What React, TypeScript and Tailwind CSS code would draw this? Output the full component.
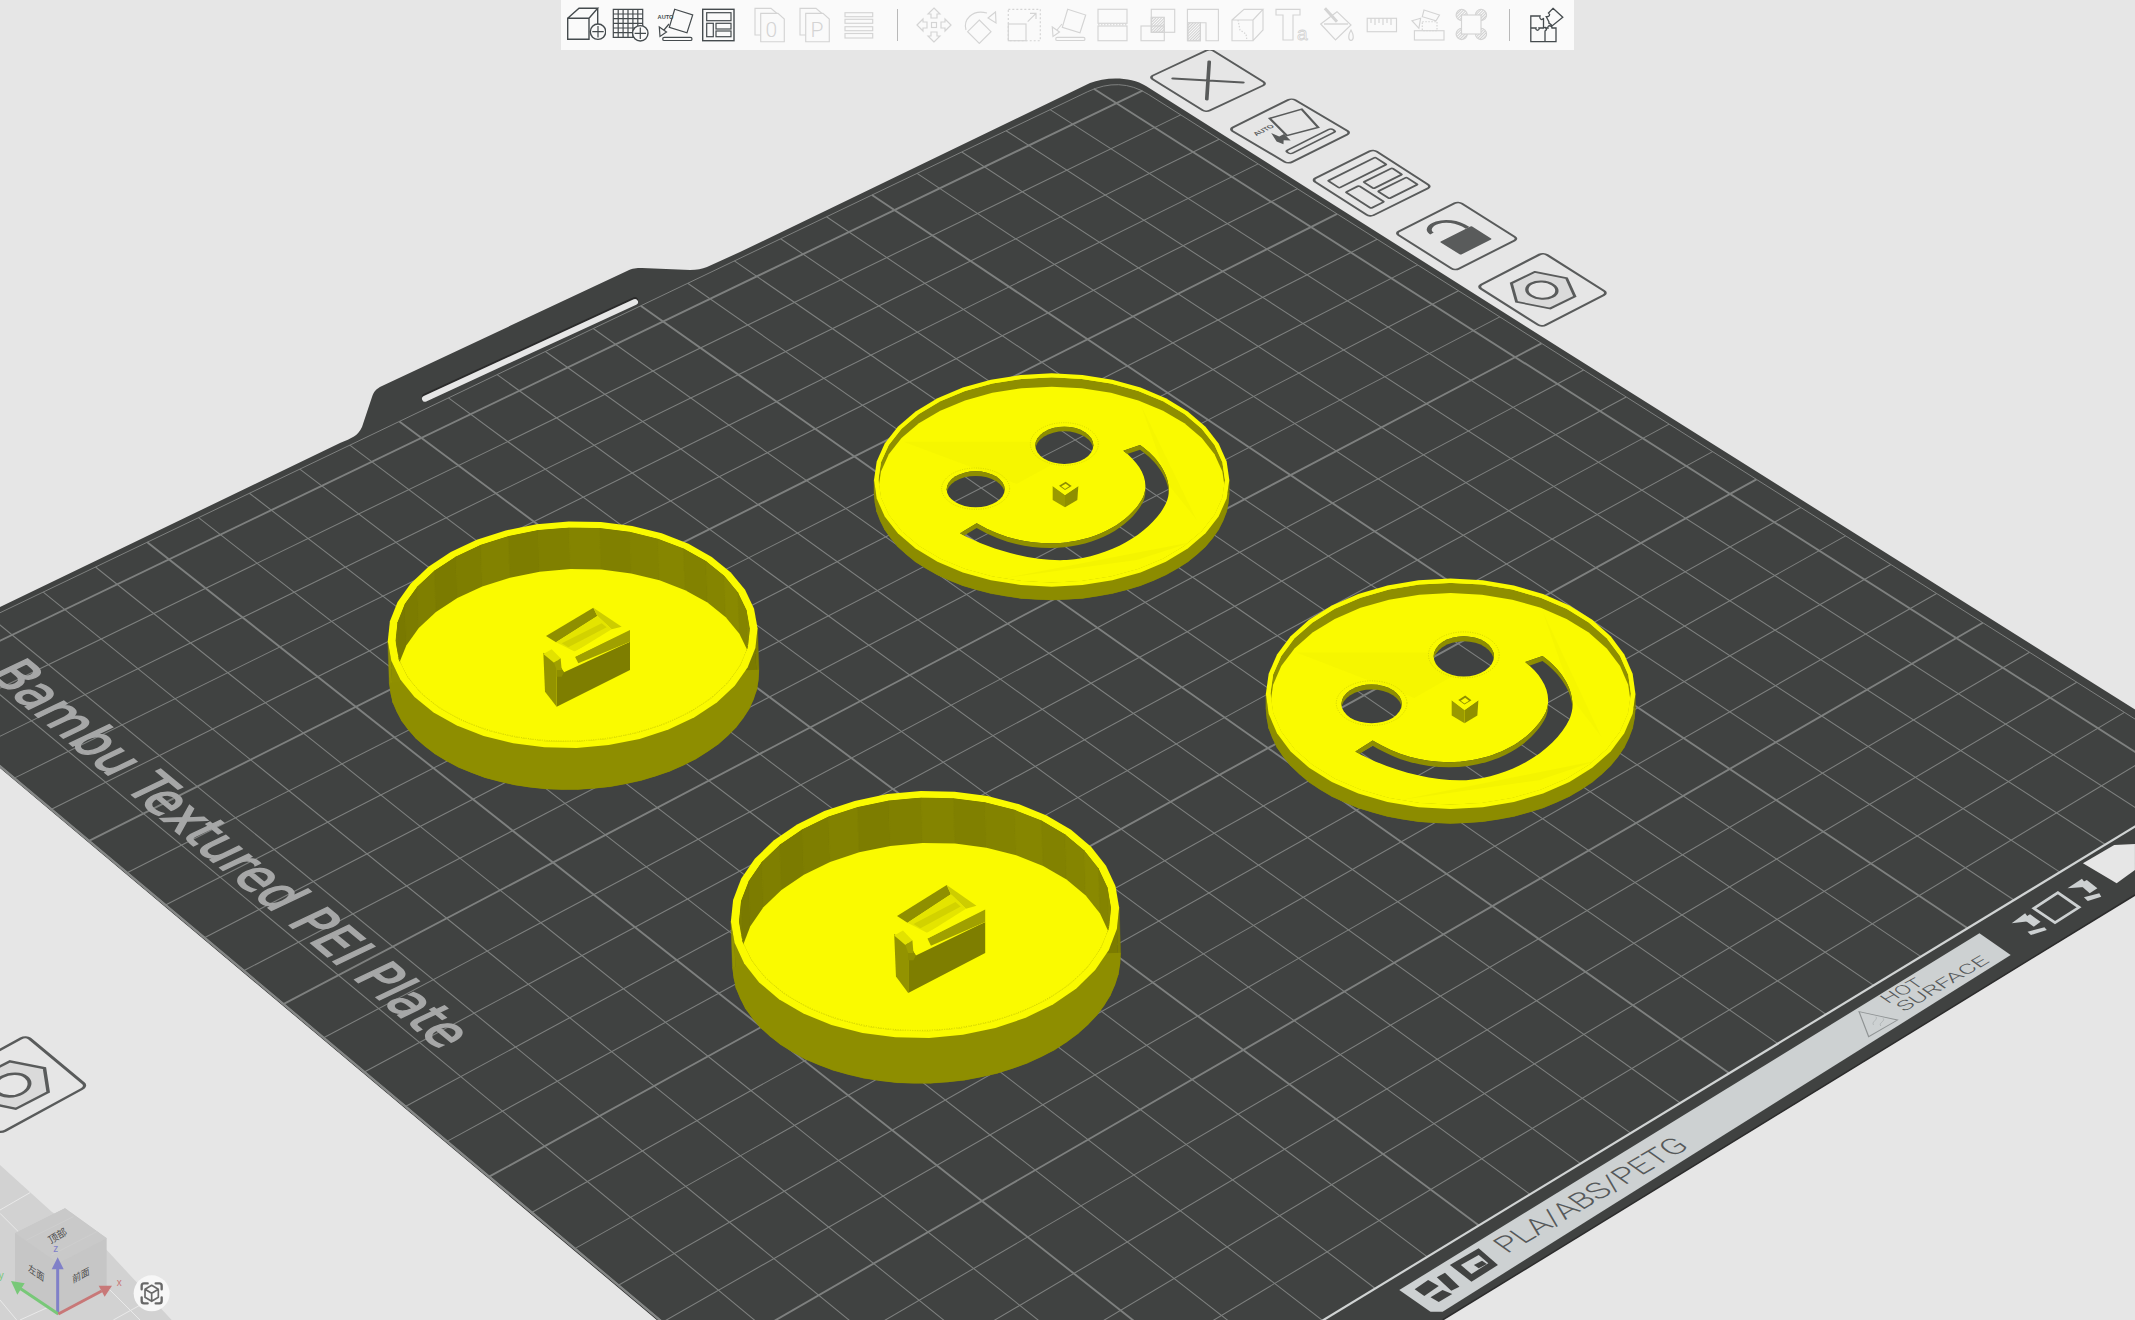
import type { ReactNode } from 'react'

type P = [number, number]

// grid anchors read off the reference: [u, v, x, y], one unit = 5 cells
const ANCHORS: number[][] = [
  [-2, 0, 421.7, 437.7], [-1, 0, 663.3, 321], [0, 0, 894.6, 210], [1, 0, 1116, 103.3],
  [0, 1, 1087.5, 340], [1, 1, 1310.7, 226.7], [1, 3, 1730.5, 494.4], [1, 4, 1956, 638.7],
  [0, 4, 1730.5, 768.8], [-1, 4, 1493, 906.7], [0, 5, 1967.4, 926.7], [-1, 5, 1729, 1073],
  [-3, 3, 759, 1026.7], [-3, 4, 981.8, 1201.7], [-4, 3, 490.5, 1176.7],
]

function fitHomography(pts: number[][]) {
  const A: number[][] = Array.from({ length: 8 }, () => new Array(9).fill(0))
  const add = (r: number[], t: number) => {
    for (let i = 0; i < 8; i++) {
      for (let j = 0; j < 8; j++) A[i][j] += r[i] * r[j]
      A[i][8] += r[i] * t
    }
  }
  for (const [u, v, x, y] of pts) {
    add([u, v, 1, 0, 0, 0, -u * x, -v * x], x)
    add([0, 0, 0, u, v, 1, -u * y, -v * y], y)
  }
  for (let i = 0; i < 8; i++) {
    let m = i
    for (let k = i + 1; k < 8; k++) if (Math.abs(A[k][i]) > Math.abs(A[m][i])) m = k
    ;[A[i], A[m]] = [A[m], A[i]]
    for (let k = 0; k < 8; k++) {
      if (k === i) continue
      const f = A[k][i] / A[i][i]
      for (let j = i; j < 9; j++) A[k][j] -= f * A[i][j]
    }
  }
  return A.map((r, i) => r[8] / r[i])
}

const H = fitHomography(ANCHORS)
const proj = (u: number, v: number): P => {
  const w = H[6] * u + H[7] * v + 1
  return [(H[0] * u + H[1] * v + H[2]) / w, (H[3] * u + H[4] * v + H[5]) / w]
}

const U_MIN = -4
const U_MAX = 1.12
const V_MIN = -0.12
const V_MAX = 5

function Grid() {
  const lines: ReactNode[] = []
  for (let i = 0; i <= 25; i++) {
    const u = U_MIN + i * 0.2
    const [a, b] = [proj(u, V_MIN), proj(u, V_MAX)]
    lines.push(<line key={'u' + i} x1={a[0]} y1={a[1]} x2={b[0]} y2={b[1]} strokeWidth={i % 5 === 0 ? 1.9 : 1.05} />)
  }
  for (let i = 0; i < 25; i++) {
    const v = i * 0.2
    const [a, b] = [proj(U_MIN, v), proj(U_MAX, v)]
    lines.push(<line key={'v' + i} x1={a[0]} y1={a[1]} x2={b[0]} y2={b[1]} strokeWidth={i % 5 === 0 ? 1.9 : 1.05} />)
  }
  const c0 = proj(0.97, V_MIN)
  const cq = proj(U_MAX, V_MIN)
  const c1 = proj(U_MAX, 0.03)
  const lt = proj(U_MIN, V_MIN)
  const rb = proj(U_MAX, V_MAX)
  const lb = proj(U_MIN, V_MAX)
  return (
    <g stroke="#7e807f">
      {lines}
      <path
        d={`M${lt[0]} ${lt[1]} L${c0[0]} ${c0[1]} Q${cq[0]} ${cq[1]} ${c1[0]} ${c1[1]} L${rb[0]} ${rb[1]}`}
        fill="none"
        strokeWidth={1}
      />
      <line x1={lt[0]} y1={lt[1]} x2={lb[0]} y2={lb[1]} strokeWidth={2.2} stroke="#858786" />
      <line x1={lb[0]} y1={lb[1]} x2={rb[0]} y2={rb[1]} strokeWidth={2.2} stroke="#d0d3d3" />
    </g>
  )
}

const PLATE =
  'M0 607 L340 443 C352 438 358 436 362 427 L372 397 C374 391 376 389 382 386 L627 271 C633 268 636 268 642 268 L690 270 C697 270 702 269 707 267 L740 252 L1090 83 C1105 77 1130 76 1146 86 L1560 348 L2135 709.5 L2200 750 L2135 895 L1442.6 1320 L658 1320 L0 767 Z'

function Tile({ l, t, b, children }: { l: P; t: P; b: P; children: ReactNode }) {
  const m = [(t[0] - l[0]) / 100, (t[1] - l[1]) / 100, (b[0] - l[0]) / 100, (b[1] - l[1]) / 100, l[0], l[1]].join(' ')
  return (
    <g transform={`matrix(${m})`} stroke="#595b5b" fill="none" strokeWidth={3.4}>
      <rect x={-2} y={-2} width={104} height={104} rx={6} />
      {children}
    </g>
  )
}

function HexNut() {
  return (
    <>
      <polygon points="68,19 87,51 69,83 31,82 11,48 32,18" fill="#dadada" />
      <circle cx={49} cy={50} r={17} fill="#e6e6e6" strokeWidth={3.8} />
    </>
  )
}

function PlateTiles() {
  return (
    <g>
      <Tile l={[1151.7, 77.3]} t={[1210, 50]} b={[1206, 111]}>
        <path d="M19 19 L81 81 M81 19 L19 81" strokeWidth={4.6} strokeLinecap="round" />
      </Tile>
      <Tile l={[1231.7, 129.3]} t={[1291.7, 99.3]} b={[1288.3, 162.7]}>
        <polygon points="51,13 94,24 81,67 40,55" strokeWidth={3.2} />
        <rect x={15} y={79} width={76} height={9} rx={4} strokeWidth={2.8} />
        <text x={12} y={31} fontSize={11} fontWeight={700} stroke="none" fill="#595b5b" className="font-['Liberation_Sans']">AUTO</text>
        <polygon points="22,56 30,38 32,50 40,50 36,66 30,60 24,66" fill="#595b5b" stroke="none" />
      </Tile>
      <Tile l={[1314.3, 180]} t={[1373.3, 150.7]} b={[1370, 215.7]}>
        <rect x={12} y={12} width={80} height={20} rx={1.5} strokeWidth={3.2} />
        <rect x={12} y={44} width={22} height={45} rx={1.5} strokeWidth={3.2} />
        <rect x={44} y={42} width={48} height={18} rx={1.5} strokeWidth={3.2} />
        <rect x={44} y={68} width={48} height={20} rx={1.5} strokeWidth={3.2} />
      </Tile>
      <Tile l={[1397.7, 233.3]} t={[1458.3, 202.7]} b={[1455, 269.3]}>
        <path d="M31 27 C31 8 72 6 72 46" strokeWidth={6} />
        <rect x={26} y={46} width={52} height={36} rx={1.5} fill="#595b5b" stroke="none" />
      </Tile>
      <Tile l={[1480, 286.7]} t={[1543.3, 254]} b={[1541.7, 325.7]}>
        <HexNut />
      </Tile>
      <Tile l={[-58, 1083]} t={[25.5, 1037.5]} b={[0.5, 1131.7]}>
        <HexNut />
      </Tile>
    </g>
  )
}

function PlateLabels() {
  return (
    <g>
      {/* name printed along the left edge */}
      <text
        transform="matrix(0.762 0.631 -1.3 0.62 -14 674)"
        x={0}
        y={0}
        fontSize={40}
        fill="#a6a7a7"
        stroke="#a6a7a7"
        strokeWidth={1.3}
        textLength={596}
        lengthAdjust="spacingAndGlyphs"
        className="font-['DejaVu_Sans']"
      >
        Bambu Textured PEI Plate
      </text>
      {/* bottom strip, coordinates are stretched to the crop I measured from */}
      <g transform={`matrix(${1 / 2.077} 0 0 ${1 / 3} 1380 820)`}>
        <polygon points="40,1410 1245,340 1310,405 130,1475 105,1475" fill="#cdd1d2" />
        <polygon points="72,1408 100,1380 122,1398 92,1428" fill="#404241" />
        <polygon points="105,1432 130,1410 150,1422 122,1446" fill="#404241" />
        <polygon points="118,1372 135,1358 165,1400 148,1412" fill="#404241" />
        <polygon points="145,1335 205,1285 245,1335 190,1385" fill="#404241" />
        <polygon points="168,1335 205,1305 225,1330 190,1362" fill="#cdd1d2" />
        <polygon points="195,1335 212,1322 222,1332 205,1345" fill="#404241" />
        <polygon points="995,575 1075,600 1015,650" fill="none" stroke="#8f9394" strokeWidth={2.5} />
        <path d="M1025 615 C1020 605 1035 600 1030 590 M1040 618 C1035 608 1050 604 1045 595" fill="none" stroke="#a2a6a7" strokeWidth={1.5} />
        {/* up arrows and the little plate between them */}
        <polygon points="1312,310 1340,280 1352,303" fill="#cdd1d2" />
        <polygon points="1335,296 1350,283 1372,305 1358,320" fill="#cdd1d2" />
        <polygon points="1345,335 1380,322 1385,330 1352,345" fill="#cdd1d2" />
        <polygon points="1358,265 1408,218 1452,262 1402,308" fill="none" stroke="#cdd1d2" strokeWidth={7} />
        <polygon points="1428,205 1458,176 1470,200" fill="#cdd1d2" />
        <polygon points="1452,192 1468,180 1490,205 1474,220" fill="#cdd1d2" />
        <polygon points="1462,232 1494,220 1498,230 1470,243" fill="#cdd1d2" />
        <polygon points="1460,130 1525,75 1568,72 1568,150 1530,190" fill="#e6e6e6" />
      </g>
      <text
        transform="matrix(0.864 -0.504 1.06 0.75 1507 1254)"
        fontSize={22}
        fontWeight={300}
        fill="#56595a"
        textLength={212}
        lengthAdjust="spacingAndGlyphs"
        className="font-['Roboto']"
      >
        PLA/ABS/PETG
      </text>
      <text
        transform="matrix(0.88 -0.475 1.06 0.75 1888 1004)"
        fontSize={13}
        fontWeight={300}
        fill="#56595a"
        textLength={42}
        lengthAdjust="spacingAndGlyphs"
        className="font-['Roboto']"
      >
        HOT
      </text>
      <text
        transform="matrix(0.864 -0.504 1.06 0.75 1904 1012)"
        fontSize={13}
        fontWeight={300}
        fill="#56595a"
        textLength={100}
        lengthAdjust="spacingAndGlyphs"
        className="font-['Roboto']"
      >
        SURFACE
      </text>
    </g>
  )
}

const ring = (cx: number, cy: number, rx: number, ry: number, a0 = 0, a1 = Math.PI * 2, n = 36): P[] => {
  const out: P[] = []
  for (let i = 0; i <= n; i++) {
    const t = a0 + ((a1 - a0) * i) / n
    out.push([cx + rx * Math.cos(t), cy + ry * Math.sin(t)])
  }
  return out
}
const pts = (p: P[]) => p.map((q) => q.join(',')).join(' ')

// one band per facet, shade runs from the value at a0 to the value at a1
function Facets({ cx, cy, rx, ry, h, a0, a1, from, to, n = 18 }: {
  cx: number; cy: number; rx: number; ry: number; h: number; a0: number; a1: number; from: number; to: number; n?: number
}) {
  const top = ring(cx, cy, rx, ry, a0, a1, n)
  const bands = []
  for (let i = 0; i < n; i++) {
    const g = Math.round(from + ((to - from) * i) / n + (i % 3 === 0 ? 3 : i % 3 === 1 ? -2 : 0))
    const c = `rgb(${g},${g},0)`
    bands.push(
      <polygon
        key={i}
        points={pts([top[i], top[i + 1], [top[i + 1][0], top[i + 1][1] + h], [top[i][0], top[i][1] + h]])}
        fill={c}
        stroke={c}
        strokeWidth={1}
      />,
    )
  }
  return <>{bands}</>
}

const YELLOW = '#fafa00'

function BatteryBox() {
  return (
    <g>
      <polygon points="530,590 750,480 750,395 552,487 530,455" fill="#7e7e00" />
      <polygon points="490,428 495,545 530,590 530,452" fill="#939300" />
      <polygon points="530,452 552,487 545,500 530,500" fill="#8e8e00" />
      <polygon points="485,358 648,282 750,348 750,395 590,460 480,388" fill={YELLOW} />
      <polygon points="498,378 640,293 652,318 528,397" fill="#8f8f00" />
      <polygon points="640,293 725,350 695,358 652,318" fill="#cdcd00" />
      <polygon points="528,397 652,318 695,358 585,425" fill="#e4e400" />
      <polygon points="545,400 665,340 680,352 565,412" fill="#d2d200" />
      <polygon points="585,440 750,360 750,395 595,460" fill="#a0a000" />
      <polygon points="582,425 745,345 750,358 585,440" fill={YELLOW} />
      <polygon points="480,385 495,383 585,450 575,460" fill={YELLOW} />
      <polygon points="490,432 515,418 542,445 522,458" fill="#e2e200" />
      <polygon points="522,458 542,445 545,480 530,480" fill="#a0a000" />
    </g>
  )
}

function Cup({ id, m }: { id: string; m: string }) {
  const cx = 578
  const cy = 374
  const h = 125
  const inner = ring(cx, cy, 532, 322)
  return (
    <g transform={`matrix(${m})`}>
      <g transform={`rotate(-2 ${cx} ${cy})`}>
        <clipPath id={id}>
          <polygon points={pts(inner)} />
        </clipPath>
        <Facets cx={cx} cy={cy} rx={555} ry={340} h={h} a0={0} a1={Math.PI} from={124} to={148} />
        <polygon points={pts(ring(cx, cy + h, 555, 340, 0, Math.PI))} fill="#8e8e00" />
        <polygon points={pts(ring(cx, cy, 555, 340))} fill={YELLOW} />
        <g clipPath={`url(#${id})`}>
          <polygon points={pts(inner)} fill="#8a8a00" />
          <Facets cx={cx} cy={cy} rx={532} ry={322} h={h + 6} a0={Math.PI} a1={Math.PI * 2} from={122} to={136} />
          <polygon points={pts(ring(cx, cy + h, 532, 322))} fill={YELLOW} />
          <polyline points={pts(ring(cx, cy - 3, 532, 322, 0.1, Math.PI - 0.1))} fill="none" stroke="#c4c400" strokeWidth={2} strokeDasharray="3 4" />
        </g>
      </g>
      <BatteryBox />
    </g>
  )
}

const SMILE =
  'M840 255 C905 300 945 370 918 430 C880 510 760 590 620 600 C520 605 390 570 300 520 L350 490 C420 530 490 550 570 550 C700 550 810 490 850 410 C870 360 840 310 790 272 Z'

function Holes({ fill, dy = 0 }: { fill: string; dy?: number }) {
  return (
    <g fill={fill} transform={`translate(0 ${dy})`}>
      <ellipse cx={613} cy={256} rx={87} ry={56} />
      <ellipse cx={347} cy={388} rx={87} ry={54} />
      <path d={SMILE} />
    </g>
  )
}

function Smiley({ id, m }: { id: string; m: string }) {
  const cx = 575
  const cy = 360
  const inner = ring(cx, cy, 520, 308)
  const box = { x: 0, y: 0, width: 1200, height: 800 }
  return (
    <g transform={`matrix(${m})`}>
      <mask id={id + 'a'} maskUnits="userSpaceOnUse" {...box}>
        <rect {...box} fill="#fff" />
        <Holes fill="#000" />
      </mask>
      <mask id={id + 'b'} maskUnits="userSpaceOnUse" {...box}>
        <rect {...box} fill="#fff" />
        <Holes fill="#000" dy={14} />
      </mask>
      <clipPath id={id + 'c'}>
        <polygon points={pts(inner)} />
      </clipPath>
      <g mask={`url(#${id}a)`}>
        <Facets cx={cx} cy={cy} rx={533} ry={320} h={40} a0={0} a1={Math.PI} from={124} to={146} />
        <polygon points={pts(ring(cx, cy + 40, 533, 320, 0, Math.PI))} fill="#8c8c00" />
        <polygon points={pts(ring(cx, cy, 533, 320))} fill={YELLOW} />
        <g clipPath={`url(#${id}c)`}>
          <polygon points={pts(inner)} fill="#8e8e00" />
          <polygon points={pts(ring(cx, cy + 28, 520, 308))} fill={YELLOW} />
          {/* faint mesh triangles on the flat face */}
          <polygon points="130,245 700,245 470,372" fill="#f6f600" />
          <polygon points="430,655 1000,545 830,600" fill="#f4f400" />
          <polygon points="840,130 1010,480 930,380" fill="#f6f600" />
        </g>
      </g>
      <g mask={`url(#${id}b)`}>
        <Holes fill="#8e8e00" />
      </g>
      <g fill="none" stroke="#c8c800" strokeWidth={2} strokeDasharray="3 4">
        <ellipse cx={613} cy={252} rx={102} ry={64} />
        <ellipse cx={347} cy={386} rx={102} ry={62} />
      </g>
      <polygon points="615,405 655,378 652,420 615,442" fill="#8f8f00" />
      <polygon points="578,378 615,405 615,442 578,420" fill="#9a9a00" />
      <polygon points="578,378 618,352 655,378 615,405" fill={YELLOW} />
      <polygon points="597,377 617,365 635,378 615,390" fill="#8e8e00" />
      <polygon points="604,379 617,371 628,379 615,387" fill={YELLOW} />
    </g>
  )
}

function Gizmo() {
  return (
    <g transform={`matrix(${1 / 3} 0 0 ${1 / 3} 0 1020)`}>
      <polygon points="0,435 155,575 320,690 515,900 0,900" fill="#d2d2d2" />
      <g stroke="#e9e9e9" strokeWidth={3}>
        <line x1={0} y1={570} x2={90} y2={518} />
        <line x1={0} y1={580} x2={60} y2={640} />
        <line x1={0} y1={840} x2={50} y2={900} />
        <line x1={320} y1={800} x2={420} y2={900} />
        <line x1={340} y1={900} x2={430} y2={850} />
        <line x1={60} y1={900} x2={170} y2={850} />
      </g>
      <polygon points="45,640 195,565 320,655 320,800 175,885 45,790" fill="#c6c6c6" />
      <polygon points="45,640 195,565 320,655 175,730" fill="#c9c9c9" />
      <g stroke="#d0d0d0" strokeWidth={2}>
        <line x1={80} y1={660} x2={220} y2={590} />
        <line x1={155} y1={705} x2={290} y2={635} />
      </g>
      <text transform="matrix(0.87 -0.5 0.5 0.87 152 672)" fontSize={30} fill="#4f4f4f" className="font-['Noto_Sans_CJK_SC']">顶部</text>
      <text transform="matrix(0.82 0.57 -0.1 1 84 752)" fontSize={29} fill="#4f4f4f" className="font-['Noto_Sans_CJK_SC']">左面</text>
      <text transform="matrix(0.88 -0.47 0.1 1 218 790)" fontSize={29} fill="#4f4f4f" className="font-['Noto_Sans_CJK_SC']">前面</text>
      <line x1={173} y1={882} x2={173} y2={745} stroke="#8080c8" strokeWidth={9} />
      <polygon points="173,712 155,748 191,748" fill="#8080c8" />
      <line x1={175} y1={882} x2={62} y2={806} stroke="#78c878" strokeWidth={9} />
      <polygon points="33,783 74,790 52,824" fill="#78c878" />
      <line x1={175} y1={882} x2={305} y2={813} stroke="#c87878" strokeWidth={9} />
      <polygon points="336,797 296,797 314,830" fill="#c87878" />
      <text x={160} y={697} fontSize={30} fill="#8080c8" className="font-['Liberation_Sans']">z</text>
      <text x={350} y={797} fontSize={30} fill="#c87878" className="font-['Liberation_Sans']">x</text>
      <text x={-4} y={778} fontSize={30} fill="#78c878" className="font-['Liberation_Sans']">y</text>
      <circle cx={455} cy={820} r={54} fill="#f7f7f7" />
      <g fill="none" stroke="#686868" strokeWidth={7} strokeLinecap="round" strokeLinejoin="round">
        <path d="M425 808 V797 Q425 790 432 790 H443 M467 790 H478 Q485 790 485 797 V808 M485 832 V843 Q485 850 478 850 H467 M443 850 H432 Q425 850 425 843 V832" />
        <path d="M455 796 L475 808 V832 L455 844 L435 832 V808 Z M435 808 L455 820 L475 808 M455 820 V844" strokeWidth={5} />
      </g>
    </g>
  )
}

function Scene() {
  return (
    <svg viewBox="0 0 2135 1320" className="block h-full w-full">
      <path d={PLATE} fill="#404241" />
      <path d="M658 1320 L0 767" stroke="#2c2c2c" strokeWidth={1.5} fill="none" />
      <path d="M1442.6 1320 L2135 895" stroke="#2c2c2c" strokeWidth={1.5} fill="none" />
      <line x1={425} y1={396.7} x2={635} y2={300} stroke="#2a2a2a" strokeWidth={6} strokeLinecap="round" />
      <line x1={425} y1={398.7} x2={635} y2={302} stroke="#e6e6e6" strokeWidth={6} strokeLinecap="round" />
      <Grid />
      <PlateLabels />
      <PlateTiles />
      <Cup id="cup1" m={`${1 / 3} 0 0 ${1 / 3} 380 510`} />
      <Cup id="cup2" m="0.35 0 0 0.3633 722.7 778.6" />
      <Smiley id="smile1" m={`${1 / 3} 0 0 ${1 / 3} 860 360`} />
      <Smiley id="smile2" m="0.3467 0 0 0.36 1251.3 564.2" />
      <Gizmo />
    </svg>
  )
}

function Ico({ on, children }: { on?: boolean; children: ReactNode }) {
  return (
    <svg
      viewBox="0 0 40 40"
      fill="none"
      stroke="currentColor"
      strokeWidth={on ? 1.2 : 1.15}
      className={on ? 'h-10 w-10 shrink-0 text-[#454b4e]' : 'h-10 w-10 shrink-0 text-[#d4d4d4]'}
    >
      {children}
    </svg>
  )
}

const Tilted = ({ auto }: { auto?: boolean }) => (
  <>
    <polygon points="19.7,5.3 37.7,11 32,28.7 14.3,23.3" />
    <rect x={7.7} y={33.3} width={29.3} height={3.2} rx={1.6} />
    <path d="M14 20 L9 26 M4.3 23 L5 32.5 L11.5 28 Z" />
    {auto && (
      <text x={2.6} y={14.5} fontSize={5.6} fontWeight={700} fill="currentColor" stroke="none" className="font-['Liberation_Sans']">
        AUTO
      </text>
    )}
  </>
)

const Pages = ({ label }: { label: string }) => (
  <>
    <path d="M10.7 31 H5 V4.3 H21 L26.7 9.3" />
    <path d="M10.7 9.3 H28 L34.3 15 V37.7 H10.7 Z" />
    <text x={15.5} y={32.5} fontSize={21} fontWeight={300} stroke="none" fill="currentColor" className="font-['Roboto']">
      {label}
    </text>
  </>
)

function Toolbar() {
  return (
    <div className="absolute inset-x-0 top-0 flex justify-center">
      <div className="flex h-[50px] w-[1013px] items-start bg-[#fafafa] pl-[5px] pt-1">
        <div className="flex gap-[4.4px]">
          <Ico on>
            <path d="M1.7 14.3 H23 V35.3 H1.7 Z M1.7 14.3 L13 4.3 H31.7 L23 14.3 M31.7 4.3 V20" strokeWidth={1.4} />
            <circle cx={32} cy={27.7} r={7.7} fill="#fafafa" strokeWidth={1.4} />
            <path d="M32 22 V33.4 M26.3 27.7 H37.7" />
          </Ico>
          <Ico on>
            <path d="M3.3 5.3 H32.7 V33.3 H3.3 Z M8.2 5.3 V33.3 M13.1 5.3 V33.3 M18 5.3 V33.3 M22.9 5.3 V33.3 M27.8 5.3 V33.3 M3.3 10 H32.7 M3.3 14.6 H32.7 M3.3 19.3 H32.7 M3.3 24 H32.7 M3.3 28.6 H32.7" />
            <circle cx={30.3} cy={29.3} r={7.7} fill="#fafafa" strokeWidth={1.4} />
            <path d="M30.3 23.6 V35 M24.6 29.3 H36" />
          </Ico>
          <Ico on>
            <Tilted auto />
          </Ico>
          <Ico on>
            <rect x={3.7} y={5.3} width={31.3} height={31.4} strokeWidth={1.4} />
            <rect x={7.7} y={8.7} width={24.3} height={8} />
            <rect x={7.7} y={19.3} width={6.6} height={13.4} />
            <rect x={17} y={19.3} width={15} height={5.7} />
            <rect x={17} y={27} width={15} height={5.7} />
          </Ico>
        </div>
        <div className="ml-[11px] flex gap-[4.4px]">
          <Ico>
            <Pages label="0" />
          </Ico>
          <Ico>
            <Pages label="P" />
          </Ico>
          <Ico>
            <rect x={6} y={8.7} width={27.7} height={4} />
            <rect x={6} y={15.3} width={27.7} height={4} />
            <rect x={6} y={22.7} width={27.7} height={4} />
            <rect x={6} y={29.5} width={27.7} height={4.5} />
          </Ico>
        </div>
        <div className="ml-[18px] mr-[16px] mt-[5px] h-8 w-px bg-[#b9b9b9]" />
        <div className="flex gap-[4.85px]">
          <Ico>
            <rect x={17.5} y={18.5} width={5} height={5} />
            {[0, 90, 180, 270].map((a) => (
              <polygon key={a} transform={`rotate(${a} 20 21)`} points="20,4 26,10 23,10 23,14 17,14 17,10 14,10" />
            ))}
          </Ico>
          <Ico>
            <polygon points="20.3,16 32,27.7 20.3,39.4 8.6,27.7" />
            <path d="M7 26 C4 16 13 5 28 9" />
            <polygon points="29,14 36.5,8 37,19" />
          </Ico>
          <Ico>
            <rect x={4.3} y={5.3} width={32} height={31.4} strokeDasharray="2 2" />
            <rect x={4.3} y={20} width={17.7} height={16.7} />
            <path d="M23.7 17.7 L32 9.3 M26 9.3 H32 V15" />
          </Ico>
          <Ico>
            <Tilted />
          </Ico>
          <Ico>
            <rect x={5} y={5.3} width={29} height={14} />
            <rect x={5} y={22} width={29} height={14.7} />
            <path d="M5 20.7 H34" strokeDasharray="1.5 1.5" />
          </Ico>
          <Ico>
            <pattern id="hatch13" width={2} height={2} patternUnits="userSpaceOnUse" patternTransform="rotate(45)">
              <rect width={1} height={2} fill="#d0d0d0" stroke="none" />
            </pattern>
            <rect x={3} y={22} width={23.3} height={14.7} />
            <rect x={13.3} y={5.3} width={23.4} height={23} />
            <rect x={13.3} y={13.3} width={13} height={15} fill="url(#hatch13)" />
          </Ico>
          <Ico>
            <path d="M4.4 5.3 H35.4 V36.7 H23 V18.7 H17.4 V36.7 H4.4 Z" />
            <rect x={5} y={18.7} width={12.4} height={18} fill="url(#hatch13)" />
          </Ico>
          <Ico>
            <path d="M4 16 H25 V36.7 H4 Z M4 16 L16 5.3 H35 L25 16 M35 5.3 V26 L25 36.7" />
            <path d="M10 16 L12 26 L18 30 L19 36.7" strokeDasharray="1.5 1.5" />
          </Ico>
          <Ico>
            <path d="M3 5.3 H27 V11 H20 V36 H10 V11 H3 Z" />
            <text x={24} y={36} fontSize={19} fill="none" strokeWidth={0.8} className="font-['Liberation_Sans']">a</text>
          </Ico>
          <Ico>
            <polygon points="2.7,20 19,7.7 33,21 17.5,36" />
            <path d="M6.9 4.3 L19 17.7" strokeWidth={3} />
            <path d="M6 20 H30" strokeWidth={1.4} />
            <path d="M33 26 C30 31 30 36 33 36.5 C36 36 36 31 33 26 Z" />
          </Ico>
          <Ico>
            <rect x={5.2} y={14.3} width={29.3} height={13.4} />
            <path d="M9 14.3 V19 M13 14.3 V21 M17 14.3 V19 M21 14.3 V21 M25 14.3 V19 M29 14.3 V21" />
          </Ico>
          <Ico>
            <rect x={7.4} y={26.7} width={29.6} height={9.3} />
            <rect x={15.3} y={17.7} width={14.7} height={9} strokeDasharray="1.5 1.5" />
            <polygon points="17,6 32.5,11 29,16.7 15.3,12.7" />
            <polygon points="5,16.7 13.6,14.3 11.9,24.3" />
          </Ico>
          <Ico>
            <circle cx={9.7} cy={11} r={5.6} fill="url(#hatch13)" />
            <circle cx={29} cy={11} r={5.6} fill="url(#hatch13)" />
            <circle cx={9.7} cy={30} r={5.6} fill="url(#hatch13)" />
            <circle cx={29} cy={30} r={5.6} fill="url(#hatch13)" />
            <rect x={9.5} y={11} width={19.5} height={19} fill="#fafafa" />
          </Ico>
        </div>
        <div className="ml-[17px] mr-[17px] mt-[5px] h-8 w-px bg-[#b9b9b9]" />
        <Ico on>
          <path
            d="M3.8 12 H13 C12 15 15 17 16.5 14 V24 C19 22 21 25 18 27 V37.7 H3.8 Z M3.8 24 H9 C8 27 13 27 12 24 H16.5 M18 24 H21 C20 21 25 21 25 24 H29 V37.7 H18"
            strokeWidth={1.3}
          />
          <path d="M26 4.3 L35.8 13.3 L25 22 C24 19 21 20 22 18 L19.3 12.7 C22 13 24 11 21.5 9 Z" strokeWidth={1.3} />
        </Ico>
      </div>
    </div>
  )
}

export default function App() {
  return (
    <div className="relative h-screen w-full overflow-hidden bg-[#e6e6e6]">
      <Scene />
      <Toolbar />
    </div>
  )
}
